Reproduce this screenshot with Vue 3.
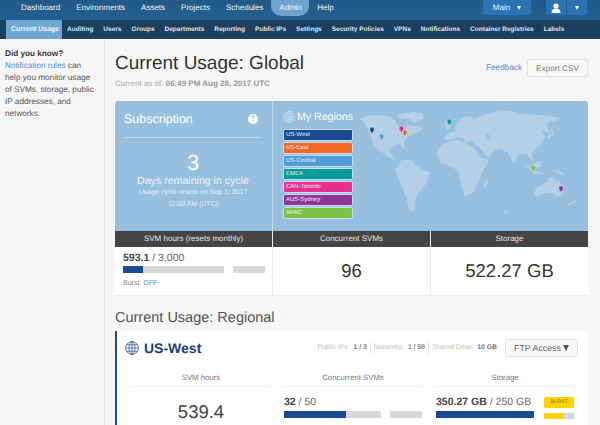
<template>
  <div class="page">
    <header class="topnav">
      <nav class="main-links">
        <a v-for="item in mainLinks" :key="item" class="main-link" :class="{ active: item === 'Admin' }">{{ item }}</a>
      </nav>
      <div class="account">
        <button class="nav-btn main-btn">Main <span class="caret"></span></button>
        <div class="user-group">
          <button class="nav-btn user-btn">
            <svg width="10" height="10" viewBox="0 0 10 10">
              <circle cx="5" cy="3" r="2.6" fill="#fff" />
              <path d="M0.6 10V8.4C0.6 6.9 2.4 6.2 3.6 5.8H6.4C7.6 6.2 9.4 6.9 9.4 8.4V10Z" fill="#fff" />
            </svg>
          </button>
          <button class="nav-btn caret-btn"><span class="caret"></span></button>
        </div>
      </div>
    </header>

    <nav class="subnav">
      <a v-for="item in subLinks" :key="item" class="sub-link" :class="{ active: item === 'Current Usage' }">{{ item }}</a>
    </nav>

    <div class="body-row">
      <aside class="sidebar">
        <strong>Did you know?</strong>
        <p><a class="link">Notification rules</a> can help you monitor usage of SVMs, storage, public IP addresses, and networks.</p>
      </aside>

      <main class="content">
        <div class="title-row">
          <div>
            <h1>Current Usage: Global</h1>
            <div class="as-of">Current as of: <b>06:49 PM Aug 28, 2017 UTC</b></div>
          </div>
          <div class="title-actions">
            <a class="link feedback">Feedback</a>
            <button class="export">Export CSV</button>
          </div>
        </div>

        <section class="panel">
          <div class="subscription">
            <div class="sub-head">
              <span>Subscription</span>
              <span class="help">?</span>
            </div>
            <div class="days">3</div>
            <div class="days-label">Days remaining in cycle</div>
            <div class="days-note">Usage cycle resets on Sep 1, 2017</div>
            <div class="days-note second">12:00 AM (UTC)</div>
          </div>
          <div class="regions">
            <div class="regions-left">
              <h2>
                <svg class="globe" width="12" height="12" viewBox="0 0 14 14" fill="none" stroke="#d5e5f2" stroke-width="0.7">
                  <circle cx="7" cy="7" r="6.5" />
                  <ellipse cx="7" cy="7" rx="3" ry="6.5" />
                  <path d="M7 0.5V13.5M0.5 7H13.5M1.6 3.8H12.4M1.6 10.2H12.4" />
                </svg>
                My Regions
              </h2>
              <div v-for="r in regions" :key="r.name" class="region-tag" :style="{ background: r.color }">{{ r.name }}</div>
            </div>
            <svg class="map" width="230" height="122" viewBox="24 18 690 366">
              <g fill="#b5d0e6">
                <path d="M28 72L60 60L100 60L125 68L135 78L145 90L155 110L168 100L172 86L185 92L205 92L218 100L205 112L185 118L170 130L160 145L166 160L158 160L150 148L125 155L115 165L125 180L138 198L120 188L100 175L85 165L68 145L62 120L50 94L42 80Z" />
                <path d="M140 60L165 55L185 50L218 54L220 68L205 80L190 84L178 72L160 72L148 70Z" />
                <path d="M135 225L155 195L185 195L198 212L215 222L242 235L226 270L205 292L194 318L194 350L176 342L168 305L150 262Z" />
                <path d="M283 132L290 118L308 112L318 108L314 96L325 80L345 65L362 62L372 72L395 62L430 52L450 46L480 47L510 55L545 58L580 62L632 68L618 78L598 80L590 92L604 128L594 112L578 105L584 128L574 150L558 158L545 175L552 200L538 186L530 176L510 175L490 205L475 175L450 160L435 165L414 190L398 168L378 150L365 138L350 142L338 128L320 128L302 136Z" />
                <path d="M260 175L275 150L300 138L322 134L345 142L375 160L390 186L418 195L400 225L385 260L372 290L345 305L332 265L322 225L290 210L270 205Z" />
                <path d="M555 285L570 272L590 262L600 248L610 245L618 262L625 255L640 275L640 300L620 305L608 295L590 295L555 303Z" />
                <path d="M399 280L405 258L415 252L412 272Z" />
                <path d="M648 330L670 320L686 308L680 318L660 330Z" />
                <path d="M520 205L535 220L552 236L590 240L560 228L540 215Z" />
                <path d="M548 205L570 198L578 212L560 218Z" />
                <path d="M604 226L625 224L648 242L625 236Z" />
                <path d="M606 100L612 118L594 132L590 126L602 118Z" />
                <path d="M283 85L296 72L306 80L302 98L288 102Z" />
                <path d="M450 350L480 350L470 354Z" />
              </g>
              <ellipse cx="412" cy="125" rx="5" ry="11" fill="#97bfdf" />
              <g v-for="p in pins" :key="p.color" :transform="`translate(${p.x} ${p.y})`">
                <path d="M0 11C-3 6 -7 3 -7 -2A7 7 0 0 1 7 -2C7 3 3 6 0 11Z" :fill="p.color" stroke="#d6e6f2" stroke-width="1.5" />
              </g>
            </svg>
          </div>
        </section>

        <section class="stats">
          <div class="stat">
            <div class="stat-head">SVM hours (resets monthly)</div>
            <div class="stat-body usage">
              <div class="amount"><b>593.1</b> / 3,000</div>
              <div class="bars">
                <div class="bar main-bar"><div class="fill" :style="{ width: '20%' }"></div></div>
                <div class="bar side-bar"></div>
              </div>
              <div class="burst">Burst: <a class="link">OFF</a></div>
            </div>
          </div>
          <div class="stat">
            <div class="stat-head">Concurrent SVMs</div>
            <div class="stat-body big">96</div>
          </div>
          <div class="stat">
            <div class="stat-head">Storage</div>
            <div class="stat-body big">522.27 GB</div>
          </div>
        </section>

        <h3 class="regional-title">Current Usage: Regional</h3>

        <section class="region-card">
          <div class="card-head">
            <svg width="14" height="14" viewBox="0 0 14 14" fill="none" stroke="#1a4a91" stroke-width="0.7">
              <circle cx="7" cy="7" r="6.4" />
              <ellipse cx="7" cy="7" rx="3" ry="6.4" />
              <path d="M7 0.6V13.4M0.6 7H13.4M1.6 3.8H12.4M1.6 10.2H12.4" />
            </svg>
            <span class="region-name">US-West</span>
            <div class="card-meta">
              <span>Public IPs: <b>1 / 3</b></span>
              <span>Networks: <b>1 / 50</b></span>
              <span>Shared Drive: <b>10 GB</b></span>
            </div>
            <button class="ftp">FTP Access <i class="ftp-caret"></i></button>
          </div>
          <div class="card-cols">
            <div class="col">
              <div class="col-head">SVM hours</div>
              <div class="col-big">539.4</div>
            </div>
            <div class="col">
              <div class="col-head">Concurrent SVMs</div>
              <div class="amount"><b>32</b> / 50</div>
              <div class="bars">
                <div class="bar main-bar"><div class="fill" :style="{ width: '64%' }"></div></div>
                <div class="bar side-bar"></div>
              </div>
              <div class="burst">Burst: <a class="link">OFF</a></div>
            </div>
            <div class="col">
              <div class="col-head">Storage</div>
              <div class="storage-row">
                <div class="storage-main">
                  <div class="amount"><b>350.27 GB</b> / 250 GB</div>
                  <div class="bar main-bar"><div class="fill" :style="{ width: '100%' }"></div></div>
                </div>
                <div class="storage-burst">
                  <span class="badge">BURST</span>
                  <div class="bar burst-bar"><div class="fill yellow" :style="{ width: '67%' }"></div></div>
                </div>
              </div>
              <div class="burst">Burst: 100 GB</div>
            </div>
          </div>
        </section>
      </main>
    </div>
  </div>
</template>

<script setup>
const mainLinks = ['Dashboard', 'Environments', 'Assets', 'Projects', 'Schedules', 'Admin', 'Help']
const subLinks = ['Current Usage', 'Auditing', 'Users', 'Groups', 'Departments', 'Reporting', 'Public IPs', 'Settings', 'Security Policies', 'VPNs', 'Notifications', 'Container Registries', 'Labels']

const regions = [
  { name: 'US-West', color: '#1a4a91' },
  { name: 'US-East', color: '#f26722' },
  { name: 'US-Central', color: '#4e9dd9' },
  { name: 'EMEA', color: '#009c97' },
  { name: 'CAN-Toronto', color: '#e8308f' },
  { name: 'AUS-Sydney', color: '#8e3596' },
  { name: 'APAC', color: '#7fc241' }
]

const pins = [
  { x: 66, y: 105, color: '#1a4a91' },
  { x: 95, y: 125, color: '#4e9dd9' },
  { x: 154, y: 102, color: '#e8308f' },
  { x: 165, y: 113, color: '#f26722' },
  { x: 298, y: 81, color: '#009c97' },
  { x: 550, y: 220, color: '#7fc241' },
  { x: 633, y: 281, color: '#8e3596' }
]
</script>

<style>
html, body {
  margin: 0;
  background: #f6f6f6;
}
</style>

<style scoped>
.page {
  width: 600px;
  height: 425px;
  overflow: hidden;
  font-family: "Liberation Sans", Arial, sans-serif;
  text-rendering: geometricPrecision;
  background: #f6f6f6;
  color: #444;
  display: flex;
  flex-direction: column;
}

.topnav {
  height: 20px;
  flex-shrink: 0;
  background: linear-gradient(#205a88, #24608f);
  display: flex;
  justify-content: space-between;
}
.main-links {
  display: flex;
  align-items: flex-start;
  padding-left: 13px;
}
.main-link {
  font-size: 8px;
  line-height: 15px;
  color: #f0f5fa;
  padding: 0 8px;
}
.main-link.active {
  background: #6ea5cf;
  border-radius: 0 0 10px 10px;
  height: 16px;
  width: 22px;
}
.account {
  display: flex;
  gap: 15px;
  padding-right: 13px;
  align-items: flex-start;
}
.user-group {
  display: flex;
  gap: 1px;
}
.nav-btn {
  border: 0;
  height: 15px;
  padding: 0;
  background: #2b73b3;
  color: #eef4fa;
  font: 8px "Liberation Sans", Arial, sans-serif;
  text-rendering: geometricPrecision;
  display: flex;
  align-items: center;
  justify-content: center;
}
.main-btn {
  width: 48px;
  gap: 7px;
  border-radius: 0 0 2px 2px;
}
.user-btn {
  width: 20px;
  border-radius: 0 0 0 2px;
}
.caret-btn {
  width: 20px;
  border-radius: 0 0 2px 0;
}
.caret {
  width: 0;
  height: 0;
  border-left: 2.5px solid transparent;
  border-right: 2.5px solid transparent;
  border-top: 4px solid #fff;
}

.subnav {
  height: 19px;
  flex-shrink: 0;
  background: #1a3f5f;
  padding-left: 6px;
  display: flex;
  align-items: stretch;
}
.sub-link {
  font-size: 6.5px;
  font-weight: 700;
  line-height: 19px;
  color: #dfe8f0;
  padding: 0 5px;
  white-space: nowrap;
}
.sub-link.active {
  box-sizing: border-box;
  width: 56px;
  background: #6ea8d0;
  color: #f2f7fb;
  font-size: 7px;
}

.body-row {
  flex: 1;
  display: flex;
  min-height: 0;
}
.sidebar {
  width: 91px;
  flex-shrink: 0;
  padding: 9px 8px 0 5px;
  border-right: 1px solid #e2e2e2;
  font-size: 8.2px;
  line-height: 12px;
  color: #555;
}
.sidebar strong {
  display: block;
  color: #333;
}
.sidebar p {
  margin: 0;
}
.link {
  color: #4a90cf;
}

.content {
  flex: 1;
  min-width: 0;
  padding: 0 12px 0 10px;
}
.title-row {
  display: flex;
  justify-content: space-between;
  height: 62px;
}
h1 {
  margin: 14px 0 0;
  font-size: 19px;
  line-height: 22px;
  font-weight: 400;
  color: #333;
}
.as-of {
  margin-top: 4px;
  font-size: 8px;
  line-height: 10px;
  color: #aaa;
}
.as-of b {
  color: #999;
}
.title-actions {
  display: flex;
  align-items: flex-start;
  gap: 5px;
  padding-top: 20px;
}
.feedback {
  font-size: 8.2px;
  line-height: 17px;
}
.export {
  width: 61px;
  height: 18px;
  background: #f8f8f8;
  border: 1px solid #e2e2e2;
  border-radius: 2px;
  color: #777;
  font: 8.2px "Liberation Sans", Arial, sans-serif;
  text-rendering: geometricPrecision;
  padding: 0;
}

.panel {
  height: 130px;
  background: #97bfdf;
  border-radius: 3px 3px 0 0;
  display: flex;
  color: #fff;
}
.subscription {
  width: 138px;
  padding: 0 10px 0 9px;
  border-right: 1px solid #c2d8ea;
  text-align: center;
  flex-shrink: 0;
}
.sub-head {
  height: 36px;
  display: flex;
  justify-content: space-between;
  align-items: center;
  font-size: 12.5px;
  border-bottom: 1px solid #bcd5e9;
}
.help {
  width: 10px;
  height: 10px;
  border-radius: 50%;
  background: #fff;
  color: #97bfdf;
  font-size: 8px;
  font-weight: 700;
  line-height: 10px;
  text-align: center;
  margin-right: 4px;
}
.days {
  margin-top: 12px;
  font-size: 22px;
  line-height: 25px;
}
.days-label {
  font-size: 10.6px;
  line-height: 12px;
  color: #eef5fb;
  white-space: nowrap;
}
.days-note {
  font-size: 7px;
  line-height: 9px;
  margin-top: 1px;
  color: #e6f0f8;
  white-space: nowrap;
}
.days-note.second {
  margin-top: 3px;
}
.regions {
  flex: 1;
  min-width: 0;
  display: flex;
  justify-content: space-between;
  padding-left: 10px;
}
.regions-left {
  width: 70px;
  flex-shrink: 0;
}
h2 {
  margin: 9px 0 5px;
  height: 14px;
  font-size: 10.6px;
  line-height: 14px;
  font-weight: 400;
  display: flex;
  align-items: center;
  gap: 2px;
  white-space: nowrap;
}
.globe {
  flex-shrink: 0;
}
.region-tag {
  box-sizing: border-box;
  height: 12px;
  margin-bottom: 1px;
  padding-left: 2px;
  border: 1px solid #c9deee;
  border-radius: 2px;
  font-size: 6px;
  line-height: 10px;
  color: #f0f5fa;
}

.stats {
  display: flex;
  height: 64px;
  background: #fff;
  border-bottom: 1px solid #ececec;
}
.stat {
  flex: 1;
  min-width: 0;
  display: flex;
  flex-direction: column;
  border-right: 1px solid #ececec;
}
.stat:last-child {
  border-right: 0;
}
.stat-head {
  height: 16px;
  background: #444;
  color: #e8e8e8;
  font-size: 8px;
  line-height: 16px;
  text-align: center;
}
.stat-body {
  flex: 1;
}
.usage {
  padding: 5px 7px 0 8px;
}
.big {
  font-size: 18.5px;
  line-height: 48px;
  text-align: center;
  color: #333;
}
.amount {
  font-size: 10.5px;
  line-height: 12px;
  color: #666;
  white-space: nowrap;
}
.amount b {
  color: #444;
}
.bars {
  display: flex;
  justify-content: space-between;
  margin-top: 2px;
}
.col .bars {
  margin-top: 3px;
}
.bar {
  height: 7px;
  background: #d8d8d8;
}
.main-bar {
  flex: 1;
}
.side-bar {
  width: 32px;
  margin-left: 9px;
}
.fill {
  height: 100%;
  background: #1a4a91;
}
.fill.yellow {
  background: #ffd200;
}
.burst {
  margin-top: 6px;
  font-size: 7px;
  line-height: 9px;
  color: #888;
}

.regional-title {
  margin: 14px 0 4px;
  height: 17px;
  font-size: 14.5px;
  line-height: 17px;
  font-weight: 400;
  color: #555;
}

.region-card {
  height: 110px;
  background: #fff;
  border-left: 2px solid #1a4a91;
  padding: 8px 10px 0 8px;
}
.card-head {
  display: flex;
  align-items: center;
  height: 18px;
}
.region-name {
  margin-left: 5px;
  font-size: 14px;
  font-weight: 700;
  color: #1c3f80;
}
.card-meta {
  margin-left: auto;
  display: flex;
  font-size: 6.8px;
  color: #bbb;
}
.card-meta span {
  padding: 0 3px;
  border-left: 1px solid #e6e6e6;
  line-height: 12px;
}
.card-meta span:first-child {
  border-left: 0;
}
.card-meta b {
  color: #777;
  margin-left: 2px;
}
.ftp {
  box-sizing: border-box;
  width: 73px;
  height: 18px;
  margin-left: 5px;
  background: #f8f8f8;
  border: 1px solid #e2e2e2;
  border-radius: 2px;
  color: #666;
  font: 8.8px "Liberation Sans", Arial, sans-serif;
  text-rendering: geometricPrecision;
  padding: 0;
  display: flex;
  align-items: center;
  justify-content: center;
  gap: 2px;
}
.ftp-caret {
  width: 0;
  height: 0;
  border-left: 3.5px solid transparent;
  border-right: 3.5px solid transparent;
  border-top: 6px solid #555;
}
.card-cols {
  display: flex;
  gap: 14px;
  padding: 14px 4px 0 7px;
}
.col {
  flex: 1;
  min-width: 0;
}
.col-head {
  height: 15px;
  font-size: 7.8px;
  line-height: 13px;
  text-align: center;
  color: #777;
  border-bottom: 1px solid #f0f0f0;
  margin-bottom: 9px;
}
.col-big {
  font-size: 18.5px;
  line-height: 22px;
  margin-top: 14px;
  text-align: center;
  color: #444;
}
.storage-row {
  display: flex;
  gap: 10px;
}
.storage-main {
  flex: 1;
  min-width: 0;
  white-space: nowrap;
}
.storage-main .bar {
  margin-top: 3px;
}
.storage-burst {
  width: 30px;
  flex-shrink: 0;
}
.badge {
  display: block;
  height: 11px;
  margin-top: 1px;
  background: #ffd200;
  border-radius: 2px;
  font-size: 5px;
  line-height: 11px;
  text-align: center;
  color: #7a6a10;
}
.burst-bar {
  height: 6px;
  margin-top: 5px;
}
</style>
